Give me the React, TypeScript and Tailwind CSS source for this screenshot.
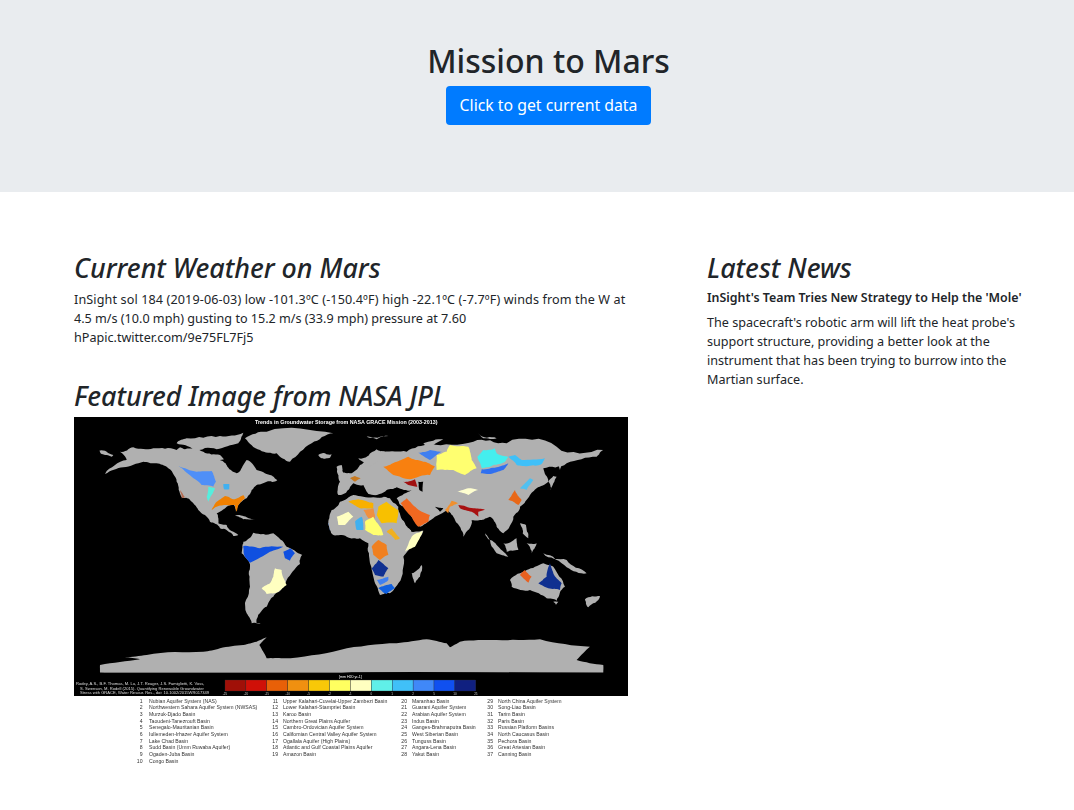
const land1 = [
  // north america
  '150,125 190,112 250,115 320,120 330,112 345,118 400,125 450,135 470,165 500,190 520,165 530,150 560,180 600,195 622,210 590,215 560,225 545,240 530,265 505,285 497,305 492,285 470,290 440,310 445,340 470,345 505,375 490,378 450,355 420,335 385,300 360,270 335,262 320,215 290,170 255,160 220,155 160,172 105,192 170,150',
  '88,122 130,135 125,140 95,132',
  // arctic islands
  '320,100 350,85 450,78 520,68 505,100 440,118 370,120',
  // greenland
  '525,85 590,65 790,70 725,100 660,155 620,130 570,120',
  '745,135 785,133 780,143 755,145',
  // caribbean
  '495,318 530,322 555,328 520,328',
  // south america
  '520,395 550,368 610,370 650,410 697,435 690,462 650,510 640,530 610,560 590,590 570,610 560,640 572,642 545,640 530,610 540,530 540,470 515,430',
]
const land2 = [
  // africa
  '-35,340 -25,300 0,275 40,255 100,260 150,265 175,290 195,340 215,365 250,362 215,410 190,440 175,520 150,550 120,555 100,500 90,460 85,400 60,385 20,380 -20,375',
  '215,490 245,465 240,500 225,520',
  // eurasia
  '-5,255 0,215 -5,190 30,190 60,165 80,140 130,125 200,125 270,100 400,95 500,100 650,110 790,120 770,140 680,160 610,175 625,215 590,235 570,255 540,290 520,320 490,370 470,350 450,320 420,330 395,330 370,380 345,330 320,300 285,320 240,350 190,290 170,265 215,240 170,232 140,240 95,258 70,225 40,220 20,245',
  '55,145 110,118 135,125 85,172',
  '-10,170 5,165 10,190 -5,195',
  // east asia islands
  '625,215 640,198 650,200 632,240',
  '655,165 665,150 660,180',
  '540,340 558,345 565,385 548,370',
  '435,370 470,405 505,440 470,430',
  '490,400 530,385 535,420 500,425',
  '560,400 590,400 575,430',
  '610,430 680,450 740,490 680,472',
  // australia
  '510,510 560,480 610,460 640,470 675,530 650,572 620,565 570,540 515,530',
  '735,568 780,558 745,592',
  '640,575 655,575 648,585',
  // arctic bits
  '80,80 145,78 110,88',
  '250,100 310,88 265,112',
  '415,70 470,85 430,85',
]
const water1 = ['450,150 490,140 515,150 505,178 470,165']
const water2 = ['175,285 190,290 232,360 215,365 195,335', '5,258 60,246 100,255 165,262 150,258 100,262 40,255', '235,215 250,215 248,245 238,240', '285,290 310,295 300,305']
const basins1: [string, string][] = [
  ['#4f8ff7', '325,168 380,185 425,183 438,215 430,230 395,225 365,200'],
  ['#55eedd', '415,230 435,235 425,255 415,275 410,260'],
  ['#40b0f0', '460,222 478,222 478,238 462,238'],
  ['#f08000', '425,300 440,275 465,258 490,268 520,255 525,265 505,285 500,305 495,285 470,285 440,290'],
  ['#b56b50', '330,240 345,262 335,265'],
  ['#1050e0', '520,408 570,415 640,410 600,425 540,458 525,440'],
  ['#1050e0', '640,425 660,415 675,430 660,452 645,445'],
  ['#ffffc0', '615,475 635,480 650,525 625,545 590,552 575,535 600,520 610,500'],
  ['#3a80f0', '775,340 785,335 790,350 780,362'],
]
const basins2: [string, string][] = [
  ['#c87a20', '30,205 45,198 62,205 45,215'],
  ['#f88010', '130,170 170,155 205,140 250,155 285,170 270,195 210,208 160,195'],
  ['#a01010', '190,215 225,208 232,230 205,225'],
  ['#3f7ff0', '235,128 270,120 305,125 270,150'],
  ['#ffff70', '290,135 320,125 330,105 385,110 395,150 410,175 375,195 340,180 290,180'],
  ['#44eeee', '412,140 430,120 465,115 470,130 505,140 495,155 460,165 425,175'],
  ['#3070f0', '425,178 470,172 505,160 490,180 460,190 422,190'],
  ['#40c0f8', '505,140 525,135 545,150 615,145 605,162 565,168 530,165'],
  ['#ffffd0', '352,245 385,235 415,240 385,255'],
  ['#50c0f0', '540,235 570,205 580,210 560,240'],
  ['#e86818', '505,270 525,240 545,270 535,285 520,275'],
  ['#a81010', '355,285 400,295 435,298 415,305 415,320 395,305 360,295'],
  ['#f09030', '315,300 335,272 355,280 330,290 325,310'],
  ['#f06820', '182,280 200,265 230,295 270,315 265,335 235,350 215,320'],
  ['#f8b000', '25,275 55,268 100,280 100,295 60,295'],
  ['#f09040', '70,300 100,295 105,325 85,325'],
  ['#f8c000', '115,290 140,275 175,300 170,340 125,340 110,315'],
  ['#ffffc0', '-10,320 25,305 40,320 15,345 -5,345'],
  ['#40b0f0', '45,335 65,320 70,360 50,360'],
  ['#ffff70', '75,335 100,320 120,350 130,375 100,375 75,360'],
  ['#f0b020', '140,365 155,355 180,385 165,390'],
  ['#ffffc0', '195,425 215,380 248,362 225,410'],
  ['#f08020', '95,410 115,390 140,405 145,435 120,450 100,435'],
  ['#103090', '95,475 115,450 145,475 130,500 105,495'],
  ['#4080f0', '110,510 145,500 145,510 120,525'],
  ['#1060e0', '115,535 155,522 165,535 140,552'],
  ['#e86020', '540,495 555,480 575,500 565,518'],
  ['#103090', '595,520 620,500 630,460 640,490 665,520 660,540 625,535'],
]
const antarctica = '90,218 90,195 210,178 165,172 230,165 400,155 450,145 520,135 560,125 590,112 568,135 590,175 640,175 810,150 980,130 1070,118 1130,130 1140,142 1170,125 1280,120 1410,118 1560,140 1520,180 1600,195 1600,218'
const scale = ['#a01008', '#d01008', '#e86008', '#f09010', '#f8c808', '#ffff60', '#ffffc0', '#60f0e8', '#40c0f8', '#4088f8', '#1050f0', '#102080']
const ticks = ['-25', '-20', '-15', '-10', '-5', '-2', '-1', '0', '1', '2', '5', '10', '25']

const aquifers = [
  { numX: 68.5, nameX: 75, start: 1, names: ['Nubian Aquifer System (NAS)', 'Northwestern Sahara Aquifer System (NWSAS)', 'Murzuk-Djado Basin', 'Taoudeni-Tanezrouft Basin', 'Senegalo-Mauritanian Basin', 'Iullemeden-Irhazer Aquifer System', 'Lake Chad Basin', 'Sudd Basin (Umm Ruwaba Aquifer)', 'Ogaden-Juba Basin', 'Congo Basin'] },
  { numX: 204, nameX: 209, start: 11, names: ['Upper Kalahari-Cuvelai-Upper Zambezi Basin', 'Lower Kalahari-Stampriet Basin', 'Karoo Basin', 'Northern Great Plains Aquifer', 'Cambro-Ordovician Aquifer System', 'Californian Central Valley Aquifer System', 'Ogallala Aquifer (High Plains)', 'Atlantic and Gulf Coastal Plains Aquifer', 'Amazon Basin'] },
  { numX: 333, nameX: 338, start: 20, names: ['Maranhao Basin', 'Guarani Aquifer System', 'Arabian Aquifer System', 'Indus Basin', 'Ganges-Brahmaputra Basin', 'West Siberian Basin', 'Tunguss Basin', 'Angara-Lena Basin', 'Yakut Basin'] },
  { numX: 419, nameX: 424, start: 29, names: ['North China Aquifer System', 'Song-Liao Basin', 'Tarim Basin', 'Paris Basin', 'Russian Platform Basins', 'North Caucasus Basin', 'Pechora Basin', 'Great Artesian Basin', 'Canning Basin'] },
]

// breaks long straight edges up so the coasts don't look cut with a ruler
function rough(points: string, amount: number) {
  let pts = points.split(' ').map((p) => p.split(',').map(Number))
  for (let pass = 0; pass < 3; pass++) {
    const next: number[][] = []
    pts.forEach((a, i) => {
      const b = pts[(i + 1) % pts.length]
      const len = Math.hypot(b[0] - a[0], b[1] - a[1])
      next.push(a)
      if (len > 6) {
        const n = Math.sin(a[0] * 12.9898 + a[1] * 78.233) * 43758.5453
        const off = (n - Math.floor(n) - 0.5) * len * amount
        next.push([(a[0] + b[0]) / 2 - ((b[1] - a[1]) / len) * off, (a[1] + b[1]) / 2 + ((b[0] - a[0]) / len) * off])
      }
    })
    pts = next
  }
  return pts.map((p) => `${p[0].toFixed(1)},${p[1].toFixed(1)}`).join(' ')
}

function GroundwaterMap() {
  return (
    <svg viewBox="0 0 554 351" className="block w-[554px] h-[351px] blur-[0.4px] font-['Liberation_Sans',sans-serif]">
      <rect width="554" height="279" fill="#000" />
      <g transform="translate(-4,-7) scale(0.3333)">
        {land1.map((p) => <polygon key={p} points={rough(p, 0.22)} fill="#b0b0b0" />)}
        {water1.map((p) => <polygon key={p} points={rough(p, 0.2)} fill="#000" />)}
        {basins1.map(([c, p]) => <polygon key={p} points={rough(p, 0.12)} fill={c} />)}
      </g>
      <g transform="translate(266,-7) scale(0.3333)">
        {land2.map((p) => <polygon key={p} points={rough(p, 0.22)} fill="#b0b0b0" />)}
        {water2.map((p) => <polygon key={p} points={rough(p, 0.1)} fill="#000" />)}
        {basins2.map(([c, p]) => <polygon key={p} points={rough(p, 0.12)} fill={c} />)}
      </g>
      {/* antarctica */}
      <g transform="translate(-4,183) scale(0.3333)">
        <polygon points={rough(antarctica, 0.05)} fill="#b0b0b0" />
        <rect x="60" y="218" width="1600" height="40" fill="#000" />
      </g>
      <text x="181" y="7" fontSize="5.35" fontWeight="700" fill="#fff">Trends in Groundwater Storage from NASA GRACE Mission (2003-2013)</text>
      <text x="265" y="260.500" fontSize="3.6" fill="#fff">[mm H20 yr-1]</text>
      <g fontSize="4.1" fill="#ddd">
        <text x="2" y="268">Rodey, A.S., B.F. Thomas, M. Lu, J.T. Reager, J.S. Famiglietti, K. Voss,</text>
        <text x="6" y="272.500">S. Swenson, M. Rodell (2015). Quantifying Renewable Groundwater</text>
        <text x="6" y="277">Stress with GRACE, Water Resour. Res., doi: 10.1002/2015WR017349</text>
      </g>
      {scale.map((c, i) => <rect key={c} x={151 + i * 20.9} y="263" width="20.9" height="11" fill={c} stroke="#333" strokeWidth="0.3" />)}
      {ticks.map((t, i) => <text key={t} x={151 + i * 20.9} y="278" fontSize="3" fill="#ccc" textAnchor="middle">{t}</text>)}
      <g fontSize="5.15" fill="#333">
        {aquifers.map((col) => col.names.map((name, i) => (
          <g key={name}>
            <text x={col.numX} y={285.500 + i * 6.67} textAnchor="end">{col.start + i}</text>
            <text x={col.nameX} y={285.500 + i * 6.67}>{name}</text>
          </g>
        )))}
      </g>
    </svg>
  )
}

export default function App() {
  return (
    <div className="min-h-[810px] bg-white text-[#212529] font-['Noto_Sans','Open_Sans',sans-serif]">
      <div className="h-[192px] bg-[#e9ecef] flex flex-col items-center pt-[39px] pl-[23px]">
        <h1 className="text-[32px] leading-[44px] font-medium">Mission to Mars</h1>
        <button className="mt-[3px] w-[205px] h-[39px] rounded bg-[#007bff] text-white text-[15.8px]">Click to get current data</button>
      </div>

      <div className="flex pl-[74px] pt-[58px] gap-[79px]">
        <div className="w-[554px]">
          <h2 className="text-[26.8px] leading-[36px] font-medium italic whitespace-nowrap">Current Weather on Mars</h2>
          <p className="mt-[4px] text-[12.6px] leading-[19px] whitespace-nowrap">
            <span className="tracking-[0.12px]">InSight sol 184 (2019-06-03) low -101.3ºC (-150.4ºF) high -22.1ºC (-7.7ºF) winds from the W at</span><br />
            4.5 m/s (10.0 mph) gusting to 15.2 m/s (33.9 mph) pressure at 7.60<br />
            hPapic.twitter.com/9e75FL7Fj5
          </p>
          <h2 className="mt-[31px] text-[26.8px] leading-[36px] font-medium italic whitespace-nowrap">Featured Image from NASA JPL</h2>
          <div className="mt-[3px]">
            <GroundwaterMap />
          </div>
        </div>

        <div className="w-[320px]">
          <h2 className="text-[26.8px] leading-[36px] font-medium italic">Latest News</h2>
          <p className="mt-[2px] text-[12.4px] leading-[19px] font-semibold whitespace-nowrap">InSight's Team Tries New Strategy to Help the 'Mole'</p>
          <p className="mt-[6px] text-[12.6px] leading-[19px] whitespace-nowrap">
            The spacecraft's robotic arm will lift the heat probe's<br />
            support structure, providing a better look at the<br />
            instrument that has been trying to burrow into the<br />
            Martian surface.
          </p>
        </div>
      </div>
    </div>
  )
}
